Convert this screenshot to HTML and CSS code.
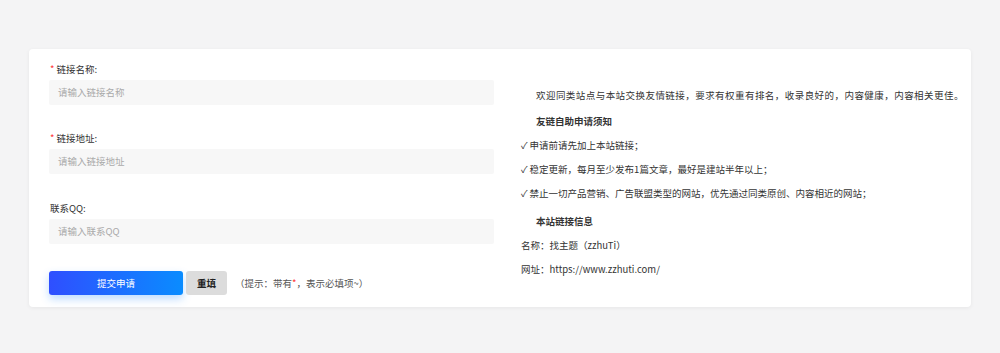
FILE: index.html
```html
<!DOCTYPE html>
<html lang="zh">
<head>
<meta charset="utf-8">
<title>友情链接申请</title>
<link rel="stylesheet" href="styles.css">
</head>
<body>
<div class="card">
  <form class="form">
    <div class="group g1">
      <label class="label"><span class="req">*</span> 链接名称:</label>
      <div class="input">请输入链接名称</div>
    </div>
    <div class="group g2">
      <label class="label"><span class="req">*</span> 链接地址:</label>
      <div class="input">请输入链接地址</div>
    </div>
    <div class="group g3">
      <label class="label">联系QQ:</label>
      <div class="input">请输入联系QQ</div>
    </div>
    <div class="actions">
      <button type="button" class="btn-submit">提交申请</button>
      <button type="button" class="btn-reset">重填</button>
      <span class="hint">（提示：带有<span class="req">*</span>，表示必填项~）</span>
    </div>
  </form>
  <div class="info">
    <p class="indent wide">欢迎同类站点与本站交换友情链接，要求有权重有排名，收录良好的，内容健康，内容相关更佳。</p>
    <p class="indent strong t1">友链自助申请须知</p>
    <p>✓ 申请前请先加上本站链接；</p>
    <p>✓ 稳定更新，每月至少发布1篇文章，最好是建站半年以上；</p>
    <p>✓ 禁止一切产品营销、广告联盟类型的网站，优先通过同类原创、内容相近的网站；</p>
    <p class="indent strong t2">本站链接信息</p>
    <p>名称：找主题（zzhuTi）</p>
    <p>网址：https://www.zzhuti.com/</p>
  </div>
</div>
</body>
</html>
```
FILE: styles.css
```css
html, body {
  margin: 0;
  padding: 0;
  background: #f4f4f5;
  font-family: "Noto Sans CJK SC", "Microsoft YaHei", sans-serif;
  font-size: 9.5px;
  color: #333;
}
body {
  padding: 49px 29px 0 29px;
  height: 353px;
  box-sizing: border-box;
}
.card {
  background: #fff;
  border-radius: 4px;
  box-shadow: 0 1px 4px rgba(0, 0, 0, 0.06);
  height: 258px;
  box-sizing: border-box;
  padding: 13px 20px 0 20px;
  display: flex;
}
.form {
  width: 445px;
  flex-shrink: 0;
  display: flex;
  flex-direction: column;
}
.group {
  display: flex;
  flex-direction: column;
  gap: 4px;
}
.g1 { margin-bottom: 26px; }
.g2 { margin-bottom: 27px; }
.g3 { margin-bottom: 27px; }
.label {
  line-height: 14px;
  padding-left: 1px;
  color: #333;
}
.req { color: #f33; }
.input {
  height: 25px;
  line-height: 25px;
  background: #f7f7f7;
  padding-left: 9px;
  color: #aaa;
  border-radius: 2px;
}
.actions {
  display: flex;
  align-items: center;
}
.btn-submit {
  width: 134px;
  height: 24px;
  border: 0;
  border-radius: 3px;
  background: linear-gradient(90deg, #2f4fff, #0a8cff);
  color: #fff;
  font: inherit;
  box-shadow: 0 4px 8px rgba(40, 140, 255, 0.3);
}
.btn-reset {
  margin-left: 3px;
  width: 41px;
  height: 24px;
  border: 0;
  border-radius: 3px;
  background: #dcdcdc;
  color: #222;
  font: inherit;
  font-weight: bold;
}
.hint {
  margin-left: 8px;
  color: #555;
}
.info {
  margin-left: 27px;
  padding-top: 21px;
  flex: 1;
  white-space: nowrap;
}
.info p {
  margin: 0;
  line-height: 24px;
  color: #333;
}
.wide { letter-spacing: 0.45px; }
.indent { padding-left: 15px; }
.strong { font-weight: bold; color: #222; }
.t1 { margin-top: 2px !important; }
.t2 { margin-top: 4px !important; }
```
